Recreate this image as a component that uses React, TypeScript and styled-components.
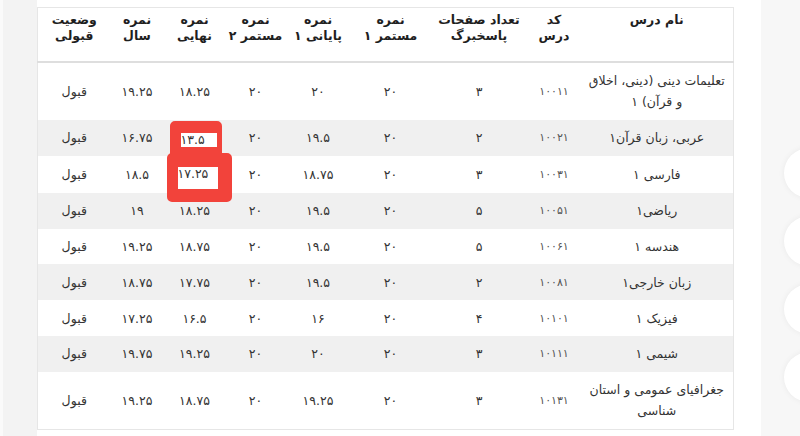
import React from "react";
import styled, { createGlobalStyle } from "styled-components";

const GlobalStyle = createGlobalStyle`
  html, body { margin: 0; padding: 0; }
  body {
    width: 800px;
    height: 436px;
    overflow: hidden;
    background: #f6f6f6;
    font-family: "DejaVu Sans", "Noto Sans", sans-serif;
  }
`;

const Page = styled.div`
  display: flex;
  width: 800px;
  height: 436px;
  overflow: hidden;
`;

const LeftStrip = styled.div`
  width: 34px;
  flex: none;
  background: #f3f3f3;
  border-left: 3px solid #fafafa;
`;

const Main = styled.div`
  width: 696px;
  flex: none;
  background: #ffffff;
  padding: 7px 28px 0 0;
`;

const RightStrip = styled.div`
  flex: 1;
  background: #f7f7f7;
  display: flex;
  flex-direction: column;
  gap: 18px;
  padding: 148px 0 0 23px;
`;

const Bubble = styled.div`
  width: 50px;
  height: 50px;
  flex: none;
  border-radius: 50%;
  background: #ffffff;
  box-shadow: 0 0 6px rgba(0, 0, 0, 0.06);
`;

const Table = styled.table`
  width: 696px;
  table-layout: fixed;
  border-collapse: collapse;
  border: 1px solid #e6e6e6;
  direction: rtl;
`;

const HeadCell = styled.th`
  height: 48px;
  padding: 4px 2px 1px;
  vertical-align: top;
  text-align: center;
  font-size: 12.5px;
  line-height: 16px;
  font-weight: bold;
  color: #1f1f1f;
  border-bottom: 2px solid #dedede;
`;

const Body = styled.tbody`
  tr:nth-child(even) td {
    background: #f0f0f0;
  }
`;

const Cell = styled.td<{ $small?: boolean }>`
  padding: 7.4px 4px;
  vertical-align: middle;
  text-align: center;
  font-size: ${(p) => (p.$small ? "11px" : "12.5px")};
  line-height: 21px;
  color: ${(p) => (p.$small ? "#555555" : "#333333")};
  white-space: pre-line;
`;

type Frame = { w: number; h: number; t: number; r: number; b: number; l: number; dx: number; dy: number };

const Marked = styled.span<{ $f: Frame }>`
  position: relative;
  display: inline-block;
  box-sizing: border-box;
  width: ${(p) => p.$f.w}px;
  height: ${(p) => p.$f.h}px;
  line-height: 14px;
  text-align: left;
  vertical-align: middle;
  background: #ffffff;
  left: ${(p) => p.$f.dx}px;
  top: ${(p) => p.$f.dy}px;
  &::after {
    content: "";
    position: absolute;
    top: -${(p) => p.$f.t}px;
    right: -${(p) => p.$f.r}px;
    bottom: -${(p) => p.$f.b}px;
    left: -${(p) => p.$f.l}px;
    border-style: solid;
    border-color: #f2433b;
    border-width: ${(p) => `${p.$f.t}px ${p.$f.r}px ${p.$f.b}px ${p.$f.l}px`};
    border-radius: 5px;
  }
`;

const widths = [153, 53, 97, 80, 65, 60, 62, 53, 73];

const headers: React.ReactNode[] = [
  "نام درس",
  <>کد<br />درس</>,
  <>تعداد صفحات<br />پاسخبرگ</>,
  <>نمره<br />مستمر ۱</>,
  <>نمره<br />پایانی ۱</>,
  <>نمره<br />مستمر ۲</>,
  <>نمره<br />نهایی</>,
  <>نمره<br />سال</>,
  <>وضعیت<br />قبولی</>,
];

type Row = {
  name: string;
  code: string;
  pages: string;
  m1: string;
  p1: string;
  m2: string;
  fin: string;
  year: string;
  frame?: Frame;
};

const rows: Row[] = [
  { name: "تعلیمات دینی (دینی، اخلاق\nو قرآن) ۱", code: "۱۰۰۱۱", pages: "۳", m1: "۲۰", p1: "۲۰", m2: "۲۰", fin: "۱۸.۲۵", year: "۱۹.۲۵" },
  { name: "عربی، زبان قرآن۱", code: "۱۰۰۲۱", pages: "۲", m1: "۲۰", p1: "۱۹.۵", m2: "۲۰", fin: "۱۳.۵", year: "۱۶.۷۵",
    frame: { w: 36, h: 14, t: 12, r: 5, b: 14, l: 11, dx: 4, dy: 1 } },
  { name: "فارسی ۱", code: "۱۰۰۳۱", pages: "۳", m1: "۲۰", p1: "۱۸.۷۵", m2: "۲۰", fin: "۱۷.۲۵", year: "۱۸.۵",
    frame: { w: 40, h: 22, t: 14, r: 14, b: 13, l: 11, dx: 3, dy: 4 } },
  { name: "ریاضی۱", code: "۱۰۰۵۱", pages: "۵", m1: "۲۰", p1: "۱۹.۵", m2: "۲۰", fin: "۱۸.۲۵", year: "۱۹" },
  { name: "هندسه ۱", code: "۱۰۰۶۱", pages: "۵", m1: "۲۰", p1: "۱۹.۵", m2: "۲۰", fin: "۱۸.۷۵", year: "۱۹.۲۵" },
  { name: "زبان خارجی۱", code: "۱۰۰۸۱", pages: "۲", m1: "۲۰", p1: "۱۹.۵", m2: "۲۰", fin: "۱۷.۷۵", year: "۱۸.۷۵" },
  { name: "فیزیک ۱", code: "۱۰۱۰۱", pages: "۴", m1: "۲۰", p1: "۱۶", m2: "۲۰", fin: "۱۶.۵", year: "۱۷.۲۵" },
  { name: "شیمی ۱", code: "۱۰۱۱۱", pages: "۳", m1: "۲۰", p1: "۲۰", m2: "۲۰", fin: "۱۹.۲۵", year: "۱۹.۷۵" },
  { name: "جغرافیای عمومی و استان\nشناسی", code: "۱۰۱۳۱", pages: "۳", m1: "۲۰", p1: "۱۹.۲۵", m2: "۲۰", fin: "۱۸.۷۵", year: "۱۹.۲۵" },
];

export default function App() {
  return (
    <>
      <GlobalStyle />
      <Page>
        <LeftStrip />
        <Main>
          <Table>
            <colgroup>
              {widths.map((w, i) => (
                <col key={i} style={{ width: w }} />
              ))}
            </colgroup>
            <thead>
              <tr>
                {headers.map((h, i) => (
                  <HeadCell key={i}>{h}</HeadCell>
                ))}
              </tr>
            </thead>
            <Body>
              {rows.map((r) => (
                <tr key={r.code}>
                  <Cell>{r.name}</Cell>
                  <Cell $small>{r.code}</Cell>
                  <Cell>{r.pages}</Cell>
                  <Cell>{r.m1}</Cell>
                  <Cell>{r.p1}</Cell>
                  <Cell>{r.m2}</Cell>
                  <Cell>{r.frame ? <Marked $f={r.frame}>{r.fin}</Marked> : r.fin}</Cell>
                  <Cell>{r.year}</Cell>
                  <Cell>قبول</Cell>
                </tr>
              ))}
            </Body>
          </Table>
        </Main>
        <RightStrip>
          <Bubble />
          <Bubble />
          <Bubble />
          <Bubble />
        </RightStrip>
      </Page>
    </>
  );
}
